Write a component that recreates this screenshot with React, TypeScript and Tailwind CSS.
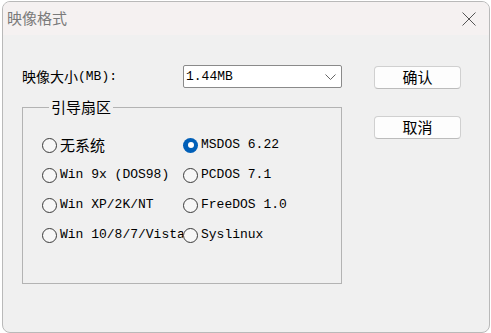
import React from "react";

const MONO = '"Liberation Mono", "Noto Sans CJK SC", monospace';
const CJK = '"Noto Sans CJK SC", "Liberation Sans", sans-serif';

function Radio({ label, checked, cjk }: { label: string; checked?: boolean; cjk?: boolean }) {
  return (
    <div className="flex items-center h-[30px] whitespace-nowrap">
      {checked ? (
        <span className="shrink-0 w-[15px] h-[15px] rounded-full bg-[#005fb8] flex items-center justify-center">
          <span className="w-[6px] h-[6px] rounded-full bg-white" />
        </span>
      ) : (
        <span className="shrink-0 w-[15px] h-[15px] rounded-full border border-[#3a3a3a] bg-[#f7f7f7]" />
      )}
      <span
        className={cjk ? "ml-[3px] text-[15px] text-black" : "ml-[3px] text-[13px] text-black"}
        style={{ fontFamily: cjk ? CJK : MONO }}
      >
        {label}
      </span>
    </div>
  );
}

export default function App() {
  const rows: [string, boolean, boolean, string, boolean][] = [
    ["无系统", true, false, "MSDOS 6.22", true],
    ["Win 9x (DOS98)", false, false, "PCDOS 7.1", false],
    ["Win XP/2K/NT", false, false, "FreeDOS 1.0", false],
    ["Win 10/8/7/Vista", false, false, "Syslinux", false],
  ];

  return (
    <div className="w-[491px] h-[333px] bg-white overflow-hidden">
      <div className="ml-[2px] mt-[1px] w-[488px] h-[332px] rounded-[8px] border border-[#b9b9b9] overflow-hidden flex flex-col bg-[#f0f0f0]">
        {/* title bar */}
        <div className="h-[33px] shrink-0 bg-[#f5f1f1] flex items-center justify-between pl-[4px] pr-[13px]">
          <span className="text-[15px] text-[#7a7a7a]" style={{ fontFamily: CJK }}>
            映像格式
          </span>
          <svg width="14" height="14" viewBox="0 0 14 14">
            <path d="M0.5 0.5L13.5 13.5M13.5 0.5L0.5 13.5" stroke="#555" strokeWidth="1" />
          </svg>
        </div>

        {/* body */}
        <div className="flex-1 flex pl-[19px] pt-[30px]">
          <div className="w-[320px]">
            <div className="flex items-center h-[23px]">
              <div className="w-[161px] flex items-center text-black">
                <span className="text-[14px]" style={{ fontFamily: CJK }}>映像大小</span>
                <span className="text-[13px]" style={{ fontFamily: MONO }}>(MB):</span>
              </div>
              <div className="w-[159px] h-[23px] bg-white border border-[#8a8a8a] rounded-[2px] flex items-center justify-between pl-[2px] pr-[5px]">
                <span className="text-[13px] text-black" style={{ fontFamily: MONO }}>1.44MB</span>
                <svg width="11" height="6" viewBox="0 0 11 6">
                  <path d="M0.5 0.5L5.5 5.5L10.5 0.5" stroke="#666" strokeWidth="1" fill="none" />
                </svg>
              </div>
            </div>

            <fieldset className="mt-[10px] h-[186px] border border-[#b3b3b3] pl-[19px] pt-[14px]">
              <legend className="ml-[7px] px-[2px] text-[15px] leading-[18px] text-black" style={{ fontFamily: CJK }}>
                引导扇区
              </legend>
              {rows.map(([l, lcjk, , r, rchecked]) => (
                <div key={l} className="flex">
                  <div className="w-[141px] overflow-hidden">
                    <Radio label={l} cjk={lcjk} />
                  </div>
                  <Radio label={r} checked={rchecked} />
                </div>
              ))}
            </fieldset>
          </div>

          <div className="ml-[32px] mt-[1px] flex flex-col gap-[27px]">
            <button className="w-[87px] h-[23px] bg-[#fdfdfd] border border-[#d0d0d0] border-b-[#bcbcbc] rounded-[4px] text-[15px] text-black flex items-center justify-center" style={{ fontFamily: CJK }}>
              确认
            </button>
            <button className="w-[87px] h-[23px] bg-[#fdfdfd] border border-[#d0d0d0] border-b-[#bcbcbc] rounded-[4px] text-[15px] text-black flex items-center justify-center" style={{ fontFamily: CJK }}>
              取消
            </button>
          </div>
        </div>
      </div>
    </div>
  );
}
